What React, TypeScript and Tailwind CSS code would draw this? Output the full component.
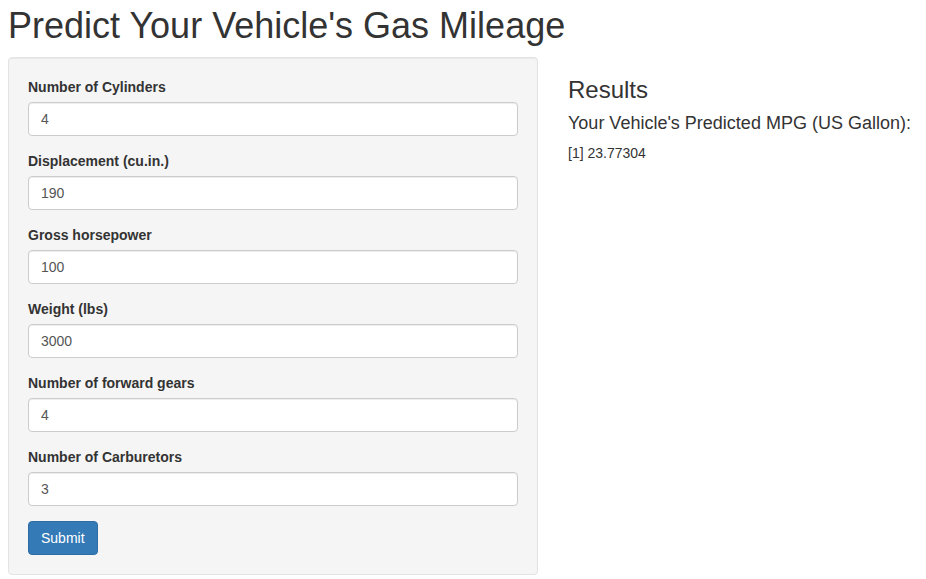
import React from "react";

type Field = { label: string; value: string };

const fields: Field[] = [
  { label: "Number of Cylinders", value: "4" },
  { label: "Displacement (cu.in.)", value: "190" },
  { label: "Gross horsepower", value: "100" },
  { label: "Weight (lbs)", value: "3000" },
  { label: "Number of forward gears", value: "4" },
  { label: "Number of Carburetors", value: "3" },
];

export default function App() {
  return (
    <div className="min-h-[579px] bg-white px-[8px] font-['Liberation_Sans',Arial,sans-serif] text-[14px] leading-[20px] text-[#333]">
      <h1 className="mt-[6px] mb-[11px] text-[36px] leading-[40px] font-normal">
        Predict Your Vehicle's Gas Mileage
      </h1>

      <div className="flex items-start gap-[30px]">
        {/* sidebar */}
        <form
          className="w-[530px] shrink-0 rounded-[4px] border border-[#e3e3e3] bg-[#f5f5f5] p-[19px] shadow-[inset_0_1px_1px_rgba(0,0,0,0.05)]"
          onSubmit={(e) => e.preventDefault()}
        >
          {fields.map((f) => (
            <div key={f.label} className="mb-[15px]">
              <label className="mb-[5px] block text-[14px] leading-[20px] font-bold">
                {f.label}
              </label>
              <input
                type="text"
                defaultValue={f.value}
                className="block h-[34px] w-full rounded-[4px] border border-[#ccc] bg-white px-[12px] py-[6px] text-[14px] text-[#555] shadow-[inset_0_1px_1px_rgba(0,0,0,0.075)] outline-none"
              />
            </div>
          ))}
          <button
            type="submit"
            className="h-[34px] rounded-[4px] border border-[#2e6da4] bg-[#337ab7] px-[12px] text-[14px] leading-[20px] text-white"
          >
            Submit
          </button>
        </form>

        {/* results */}
        <div className="flex flex-col">
          <h3 className="mt-[20px] text-[24px] leading-[26px] font-normal">
            Results
          </h3>
          <h4 className="mt-[10px] text-[18px] leading-[20px] font-normal">
            Your Vehicle's Predicted MPG (US Gallon):
          </h4>
          <div className="mt-[10px] text-[14px] leading-[20px]">[1] 23.77304</div>
        </div>
      </div>
    </div>
  );
}
